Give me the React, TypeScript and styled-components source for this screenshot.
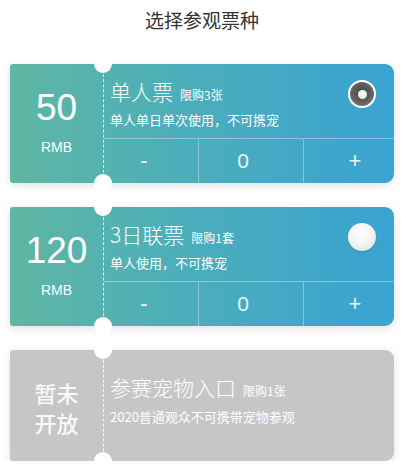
import React from "react";
import styled, { createGlobalStyle, css } from "styled-components";

const Global = createGlobalStyle`
  html, body { margin: 0; padding: 0; background: #ffffff; }
  body { font-family: "Liberation Sans", "Noto Sans CJK SC", sans-serif; }
`;

const Page = styled.div`
  width: 406px;
  padding: 0 12px 0 10px;
  box-sizing: border-box;
  display: flex;
  flex-direction: column;
`;

const Header = styled.div`
  height: 40px;
  line-height: 40px;
  text-align: center;
  font-family: "Noto Sans CJK SC", sans-serif;
  font-size: 19px;
  color: #333333;
  margin-bottom: 24px;
`;

const List = styled.div`
  display: flex;
  flex-direction: column;
  gap: 24px;
`;

const Card = styled.div<{ $disabled?: boolean }>`
  position: relative;
  display: flex;
  border-radius: 3px 9px 9px 3px;
  box-shadow: 0 2px 8px rgba(0, 0, 0, 0.13);
  ${(p) =>
    p.$disabled
      ? css`
          background: #c6c6c6;
          height: 111px;
        `
      : css`
          background: linear-gradient(90deg, #5fb6a3 0%, #4eafb8 40%, #39a3d2 100%);
          height: 119px;
        `}
`;

const Notch = styled.span<{ $bottom?: boolean }>`
  position: absolute;
  left: 84px;
  width: 18px;
  height: 18px;
  border-radius: 50%;
  background: #ffffff;
  ${(p) => (p.$bottom ? "bottom: -9px;" : "top: -9px;")}
`;

const Stub = styled.div`
  width: 93px;
  flex-shrink: 0;
  display: flex;
  flex-direction: column;
  align-items: center;
  justify-content: center;
  color: #ffffff;
`;

const Price = styled.div`
  font-family: "Liberation Sans", sans-serif;
  font-size: 37px;
  line-height: 40px;
  margin-top: -4px;
`;

const Unit = styled.div`
  font-family: "Liberation Sans", sans-serif;
  font-size: 14px;
  line-height: 16px;
  margin-top: 11px;
`;

const Closed = styled.div`
  font-family: "Noto Sans CJK SC", sans-serif;
  font-size: 22px;
  line-height: 30px;
  font-weight: 500;
  text-align: center;
  color: rgba(255, 255, 255, 0.92);
  margin-top: 3px;
`;

const Main = styled.div`
  flex: 1;
  display: flex;
  flex-direction: column;
  border-left: 1px dashed rgba(255, 255, 255, 0.85);
  min-width: 0;
`;

const Upper = styled.div<{ $tall?: boolean }>`
  display: flex;
  justify-content: space-between;
  height: 74px;
  padding-left: 6px;
  ${(p) => p.$tall && "flex: 1;"}
`;

const Info = styled.div<{ $pad?: number }>`
  display: flex;
  flex-direction: column;
  padding-top: ${(p) => p.$pad ?? 15}px;
  color: #ffffff;
  font-family: "Noto Sans CJK SC", sans-serif;
`;

const TitleRow = styled.div`
  display: flex;
  align-items: baseline;
  gap: 7px;
  line-height: 24px;
`;

const Title = styled.span`
  font-size: 21px;
  font-weight: 300;
`;

const Limit = styled.span`
  font-size: 12px;
`;

const Desc = styled.div<{ $gap?: number }>`
  font-size: 13px;
  line-height: 18px;
  margin-top: ${(p) => p.$gap ?? 4}px;
`;

const Radio = styled.div<{ $checked?: boolean }>`
  width: 28px;
  height: 28px;
  border-radius: 50%;
  box-sizing: border-box;
  margin: 16px 18px 0 0;
  flex-shrink: 0;
  display: flex;
  align-items: center;
  justify-content: center;
  ${(p) =>
    p.$checked
      ? css`
          border: 2px solid #ffffff;
          background: radial-gradient(circle at 50% 45%, #4a4a4a 0%, #5a5a5a 45%, #8a8a8a 100%);
          &::after {
            content: "";
            width: 9px;
            height: 9px;
            border-radius: 50%;
            background: radial-gradient(circle at 50% 40%, #ffffff 0%, #dddddd 100%);
          }
        `
      : css`
          background: radial-gradient(circle at 45% 35%, #ffffff 0%, #f3f3f3 50%, #d6d6d6 100%);
          box-shadow: 0 1px 2px rgba(0, 0, 0, 0.15);
        `}
`;

const Counter = styled.div`
  display: grid;
  grid-template-columns: 94px 105px 1fr;
  height: 45px;
  border-top: 1px solid rgba(255, 255, 255, 0.35);
  box-sizing: border-box;
`;

const Cell = styled.div<{ $shift: number; $size: number; $divider?: boolean }>`
  display: flex;
  align-items: center;
  justify-content: center;
  color: rgba(255, 255, 255, 0.92);
  font-family: "Liberation Sans", sans-serif;
  font-size: ${(p) => p.$size}px;
  padding-left: ${(p) => (p.$shift > 0 ? p.$shift * 2 : 0)}px;
  padding-right: ${(p) => (p.$shift < 0 ? -p.$shift * 2 : 0)}px;
  ${(p) => p.$divider && "border-left: 1px solid rgba(255, 255, 255, 0.35);"}
`;

type Ticket = {
  price: string;
  title: string;
  limit: string;
  desc: string;
  checked: boolean;
};

const tickets: Ticket[] = [
  { price: "50", title: "单人票", limit: "限购3张", desc: "单人单日单次使用，不可携宠", checked: true },
  { price: "120", title: "3日联票", limit: "限购1套", desc: "单人使用，不可携宠", checked: false },
];

export default function App() {
  return (
    <Page>
      <Global />
      <Header>选择参观票种</Header>
      <List>
        {tickets.map((t) => (
          <Card key={t.title}>
            <Notch />
            <Notch $bottom />
            <Stub>
              <Price>{t.price}</Price>
              <Unit>RMB</Unit>
            </Stub>
            <Main>
              <Upper>
                <Info>
                  <TitleRow>
                    <Title>{t.title}</Title>
                    <Limit>{t.limit}</Limit>
                  </TitleRow>
                  <Desc>{t.desc}</Desc>
                </Info>
                <Radio $checked={t.checked} />
              </Upper>
              <Counter>
                <Cell $shift={-7} $size={22}>-</Cell>
                <Cell $shift={-8} $size={21} $divider>0</Cell>
                <Cell $shift={6} $size={22} $divider>+</Cell>
              </Counter>
            </Main>
          </Card>
        ))}
        <Card $disabled>
          <Notch />
          <Notch $bottom />
          <Stub>
            <Closed>
              暂未
              <br />
              开放
            </Closed>
          </Stub>
          <Main>
            <Upper $tall>
              <Info $pad={25}>
                <TitleRow>
                  <Title>参赛宠物入口</Title>
                  <Limit>限购1张</Limit>
                </TitleRow>
                <Desc $gap={5}>2020普通观众不可携带宠物参观</Desc>
              </Info>
            </Upper>
          </Main>
        </Card>
      </List>
    </Page>
  );
}
